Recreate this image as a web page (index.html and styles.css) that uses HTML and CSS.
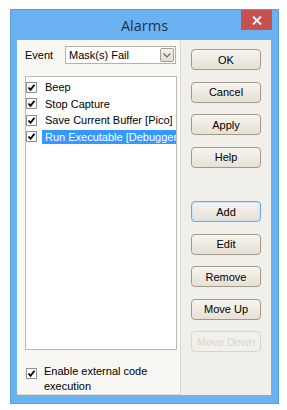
FILE: index.html
```html
<!DOCTYPE html>
<html lang="en">
<head>
    <meta charset="UTF-8">
    <title>Alarms</title>
    <link rel="stylesheet" href="styles.css">
</head>
<body>
    <div class="window">
        <div class="titlebar">
            <span class="title">Alarms</span>
            <span class="close">
                <svg width="10" height="9" viewBox="0 0 10 9"><path d="M1 0.5 L9 8.5 M9 0.5 L1 8.5" stroke="#fff" stroke-width="1.8"/></svg>
            </span>
        </div>
        <div class="client">
            <div class="panel">
                <div class="event-row">
                    <label class="event-label">Event</label>
                    <div class="combo">
                        <span class="combo-text">Mask(s) Fail</span>
                        <span class="combo-btn">
                            <svg width="8" height="5" viewBox="0 0 8 5"><path d="M0.5 0.5 L4 4 L7.5 0.5" fill="none" stroke="#6d6a64" stroke-width="1.2"/></svg>
                        </span>
                    </div>
                </div>
                <ul class="list">
                    <li class="item"><span class="check"></span>Beep</li>
                    <li class="item"><span class="check"></span>Stop Capture</li>
                    <li class="item"><span class="check"></span>Save Current Buffer [Pico]</li>
                    <li class="item"><span class="check"></span><span class="sel">Run Executable [Debugger]</span></li>
                </ul>
                <div class="enable-row">
                    <span class="check"></span>
                    <span class="enable-text">Enable external code execution</span>
                </div>
            </div>
            <div class="buttons">
                <button class="btn">OK</button>
                <button class="btn">Cancel</button>
                <button class="btn">Apply</button>
                <button class="btn">Help</button>
                <button class="btn default gap">Add</button>
                <button class="btn">Edit</button>
                <button class="btn">Remove</button>
                <button class="btn">Move Up</button>
                <button class="btn" disabled>Move Down</button>
            </div>
        </div>
    </div>
</body>
</html>
```

FILE: styles.css
```css
body {
    margin: 0;
    background: #ffffff;
    font-family: "Liberation Sans", Arial, sans-serif;
    font-size: 11px;
    color: #000000;
}
.window {
    margin: 9px 0 0 10px;
    width: 269px;
    height: 395px;
    box-sizing: border-box;
    background: #6ab2f2;
    border: 1px solid #5a9ede;
    display: flex;
    flex-direction: column;
}
.titlebar {
    height: 30px;
    position: relative;
    display: flex;
    justify-content: center;
    align-items: center;
}
.title {
    font-family: "Open Sans", "Noto Sans", sans-serif;
    font-size: 14.5px;
    color: #1e3246;
    margin-top: 1px;
}
.close {
    position: absolute;
    top: 0;
    right: 6px;
    width: 31px;
    height: 20px;
    background: #c75050;
    display: flex;
    justify-content: center;
    align-items: center;
}
.client {
    flex: 1;
    margin: 0 7px 8px 6px;
    background: #f0efea;
    display: flex;
}
.panel {
    width: 164px;
    box-sizing: border-box;
    background: #f8f7f4;
    border-right: 1px solid #dcd9d1;
    border-bottom: 1px solid #dcd9d1;
    border-top-right-radius: 3px;
    padding: 6px 4px 0 8px;
    display: flex;
    flex-direction: column;
}
.event-row {
    display: flex;
    align-items: center;
    height: 18px;
}
.event-label {
    width: 40px;
}
.combo {
    width: 111px;
    height: 18px;
    box-sizing: border-box;
    background: #ffffff;
    border: 1px solid #b5b2aa;
    display: flex;
    align-items: center;
    justify-content: space-between;
    padding: 0 1px 0 3px;
}
.combo-btn {
    width: 14px;
    height: 14px;
    box-sizing: border-box;
    border: 1px solid #a59f92;
    border-radius: 2px;
    background: linear-gradient(#f4f2ec, #e2ddd0);
    display: flex;
    justify-content: center;
    align-items: center;
}
.list {
    list-style: none;
    margin: 12px 0 0 0;
    padding: 2px 0 0 0;
    width: 152px;
    height: 274px;
    box-sizing: border-box;
    background: #ffffff;
    border: 1px solid #bcbab4;
    overflow: hidden;
}
.item {
    height: 16.5px;
    display: flex;
    align-items: center;
    white-space: nowrap;
}
.check {
    flex: none;
    width: 11px;
    height: 11px;
    box-sizing: border-box;
    border: 1px solid #8e8f8f;
    background: #ffffff url("data:image/svg+xml,%3Csvg xmlns='http://www.w3.org/2000/svg' width='9' height='9'%3E%3Cpath d='M1.5 4.5 L3.5 6.8 L7.5 1.8' fill='none' stroke='%23000' stroke-width='1.8'/%3E%3C/svg%3E") no-repeat center;
    margin: 0 8px 0 0;
}
.sel {
    background: #3399ff;
    color: #ffffff;
    padding: 0 0 0 3px;
    line-height: 14px;
    flex: 1;
    margin-left: -3px;
    overflow: hidden;
}
.enable-row {
    display: flex;
    align-items: flex-start;
    margin-top: 14px;
    padding-left: 1px;
}
.enable-row .check {
    margin-top: 4px;
    margin-right: 7px;
}
.enable-text {
    width: 115px;
    line-height: 15px;
}
.buttons {
    flex: 1;
    display: flex;
    flex-direction: column;
    align-items: flex-start;
    padding: 9px 0 0 10px;
    gap: 11.5px;
}
.btn {
    width: 70px;
    height: 21px;
    box-sizing: border-box;
    font-family: "Liberation Sans", Arial, sans-serif;
    font-size: 11px;
    color: #000000;
    background: linear-gradient(#f6f4ef, #e6e1d5);
    border: 1px solid #a29b8d;
    border-radius: 4px;
    padding: 0;
}
.btn.default {
    border-color: #6fa7e2;
    box-shadow: inset 0 0 0 1px #cfe3f7;
}
.btn.gap {
    margin-top: 22px;
}
.btn:disabled {
    color: #d9d5cd;
    border-color: #d8d4cb;
    background: #f2f0eb;
}
```
